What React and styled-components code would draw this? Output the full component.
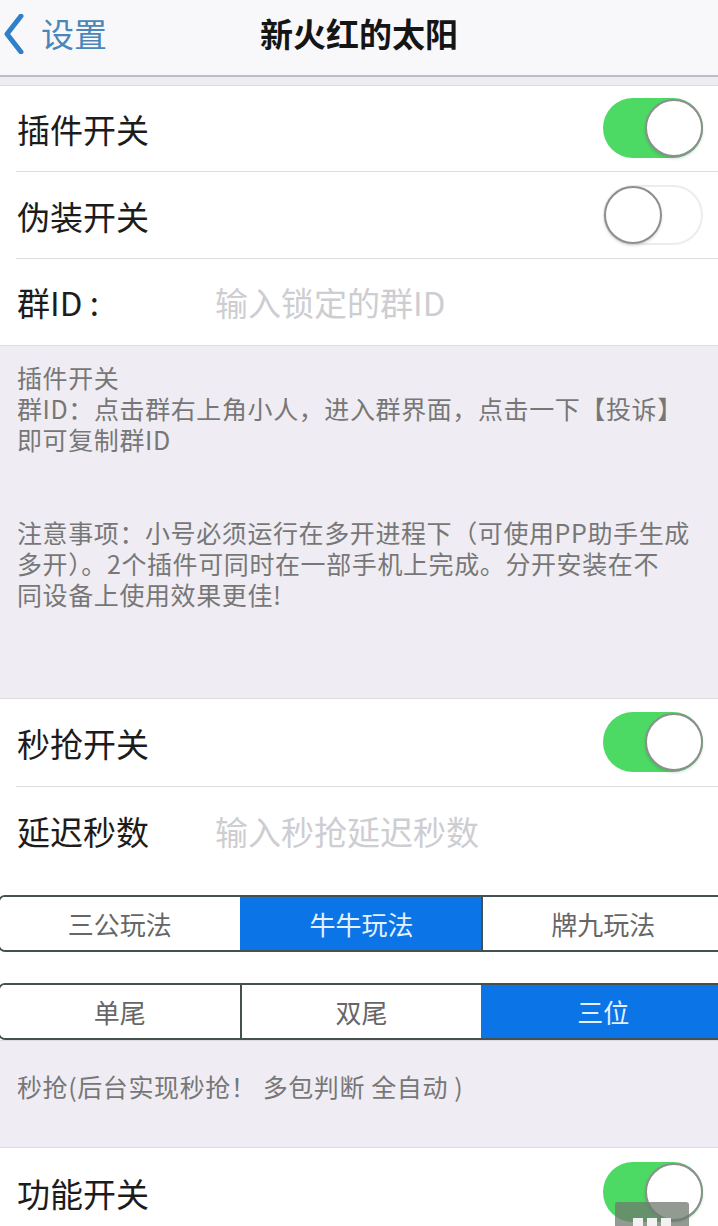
import React, { useState } from 'react';
import styled, { createGlobalStyle } from 'styled-components';

const GlobalStyle = createGlobalStyle`
  html, body {
    margin: 0;
    padding: 0;
    background: #efedf3;
    overflow: hidden;
  }
  body {
    font-family: "Noto Sans CJK SC", "Noto Sans", sans-serif;
    -webkit-font-smoothing: antialiased;
  }
`;

const Page = styled.div`
  position: relative;
  width: 718px;
  height: 1226px;
  overflow: hidden;
  background: #efedf3;
`;

const NavBar = styled.div`
  height: 75px;
  background: #f8f8fa;
  border-bottom: 2px solid #bdbdc2;
  display: grid;
  grid-template-columns: 1fr auto 1fr;
  align-items: center;
`;

const BackButton = styled.div`
  display: flex;
  align-items: center;
  gap: 17px;
  padding-left: 4px;
  color: #4a86ba;
  font-size: 33px;
  line-height: 1;
  margin-top: -8px;
`;

const Title = styled.div`
  font-size: 33px;
  font-weight: 700;
  color: #151515;
  margin-top: -10px;
`;

const Gap = styled.div`
  height: ${p => p.h}px;
`;

const Group = styled.div`
  background: #fff;
  border-top: 1px solid #dcdbe0;
  border-bottom: ${p => (p.noBottom ? 'none' : '1px solid #dcdbe0')};
`;

const Row = styled.div`
  height: ${p => p.h || 86}px;
  display: flex;
  align-items: center;
  padding: 0 16px 0 17px;
  position: relative;
  &:not(:last-child)::after {
    content: '';
    position: absolute;
    left: 16px;
    right: 0;
    bottom: 0;
    height: 1px;
    background: #dedde2;
  }
`;

const Label = styled.div`
  font-size: 33px;
  color: #1c1c1c;
  width: ${p => p.w || 'auto'};
  flex-shrink: 0;
  white-space: nowrap;
`;

const Input = styled.input`
  border: none;
  outline: none;
  background: transparent;
  font-family: inherit;
  font-size: 33px;
  color: #333;
  flex: 1;
  min-width: 0;
  padding: 0;
  &::placeholder {
    color: #cdcdd2;
  }
`;

const Track = styled.div`
  margin-left: auto;
  width: 100px;
  height: 60px;
  border-radius: 30px;
  box-sizing: border-box;
  background: ${p => (p.on ? '#4cd964' : '#fff')};
  border: ${p => (p.on ? 'none' : '2px solid #ececee')};
  position: relative;
  cursor: pointer;
  margin-right: -1px;
  margin-top: -2px;
`;

const Knob = styled.div`
  position: absolute;
  top: ${p => (p.on ? 1 : -1)}px;
  left: ${p => (p.on ? 42 : -1)}px;
  width: 58px;
  height: 58px;
  border-radius: 50%;
  box-sizing: border-box;
  background: #fff;
  border: 2px solid #8d8f8f;
  box-shadow: 0 2px 3px rgba(0, 0, 0, 0.12);
`;

const Note = styled.div`
  padding: ${p => p.pad};
  font-size: 25px;
  letter-spacing: 0.6px;
  line-height: 31px;
  color: #777;
  white-space: nowrap;
`;

const SegmentWrap = styled.div`
  background: #fff;
  padding: 20px 0 0;
  display: flex;
  flex-direction: column;
  gap: 31px;
  border-bottom: 1px solid #dcdbe0;
`;

const Segmented = styled.div`
  display: flex;
  margin-left: -2px;
  width: 727px;
  height: 57px;
  box-sizing: border-box;
  border: 2px solid #44514f;
  border-radius: 7px;
  overflow: hidden;
`;

const Segment = styled.div`
  flex: 1;
  display: flex;
  align-items: center;
  justify-content: center;
  font-size: 26px;
  color: ${p => (p.active ? '#e4f1ff' : '#666')};
  background: ${p => (p.active ? '#0b74e6' : '#fff')};
  border-left: ${p => (p.first ? 'none' : p.active ? '2px solid #0b74e6' : '2px solid #44514f')};
  cursor: pointer;
`;

const Watermark = styled.div`
  position: absolute;
  left: 615px;
  top: 1202px;
  width: 74px;
  height: 26px;
  background: rgba(110, 120, 110, 0.75);
  border-radius: 3px;
  display: flex;
  align-items: flex-end;
  justify-content: center;
  gap: 4px;
  box-sizing: border-box;
`;

const Dot = styled.div`
  width: 10px;
  height: 10px;
  background: #f2f2f2;
`;

const Toggle = ({ on, onClick }) => (
  <Track on={on ? 1 : 0} onClick={onClick}>
    <Knob on={on ? 1 : 0} />
  </Track>
);

const SegmentGroup = ({ items, value, onChange }) => (
  <Segmented>
    {items.map((it, i) => (
      <Segment key={it} first={i === 0} active={value === i} onClick={() => onChange(i)}>
        {it}
      </Segment>
    ))}
  </Segmented>
);

export default function App() {
  const [plugin, setPlugin] = useState(true);
  const [disguise, setDisguise] = useState(false);
  const [grab, setGrab] = useState(true);
  const [feature, setFeature] = useState(true);
  const [mode, setMode] = useState(1);
  const [tail, setTail] = useState(2);

  return (
    <Page>
      <GlobalStyle />
      <NavBar>
        <BackButton>
          <svg width="20" height="40" viewBox="0 0 20 40">
            <path d="M17 2 L3 20 L17 38" fill="none" stroke="#2f80c8" strokeWidth="5" strokeLinecap="round" strokeLinejoin="round" />
          </svg>
          设置
        </BackButton>
        <Title>新火红的太阳</Title>
        <div />
      </NavBar>
      <Gap h={8} />
      <Group>
        <Row h={86}>
          <Label>插件开关</Label>
          <Toggle on={plugin} onClick={() => setPlugin(!plugin)} />
        </Row>
        <Row h={87}>
          <Label>伪装开关</Label>
          <Toggle on={disguise} onClick={() => setDisguise(!disguise)} />
        </Row>
        <Row h={86}>
          <Label w="198px">群ID :</Label>
          <Input placeholder="输入锁定的群ID" />
        </Row>
      </Group>
      <Note pad="16px 17px 0" style={{ height: 336 }}>
        插件开关
        <br />
        群ID：点击群右上角小人，进入群界面，点击一下【投诉】
        <br />
        即可复制群ID
        <br />
        <br />
        <br />
        注意事项：小号必须运行在多开进程下（可使用PP助手生成
        <br />
        多开）。2个插件可同时在一部手机上完成。分开安装在不
        <br />
        同设备上使用效果更佳!
      </Note>
      <Group noBottom>
        <Row h={88}>
          <Label>秒抢开关</Label>
          <Toggle on={grab} onClick={() => setGrab(!grab)} />
        </Row>
        <Row h={88}>
          <Label w="198px">延迟秒数</Label>
          <Input placeholder="输入秒抢延迟秒数" />
        </Row>
      </Group>
      <SegmentWrap>
        <SegmentGroup items={['三公玩法', '牛牛玩法', '牌九玩法']} value={mode} onChange={setMode} />
        <SegmentGroup items={['单尾', '双尾', '三位']} value={tail} onChange={setTail} />
      </SegmentWrap>
      <Note pad="30px 17px 0" style={{ height: 76 }}>
        秒抢(后台实现秒抢！ 多包判断 全自动 )
      </Note>
      <Group noBottom>
        <Row h={90}>
          <Label>功能开关</Label>
          <Toggle on={feature} onClick={() => setFeature(!feature)} />
        </Row>
      </Group>
      <Watermark>
        <Dot />
        <Dot />
        <Dot />
      </Watermark>
    </Page>
  );
}
